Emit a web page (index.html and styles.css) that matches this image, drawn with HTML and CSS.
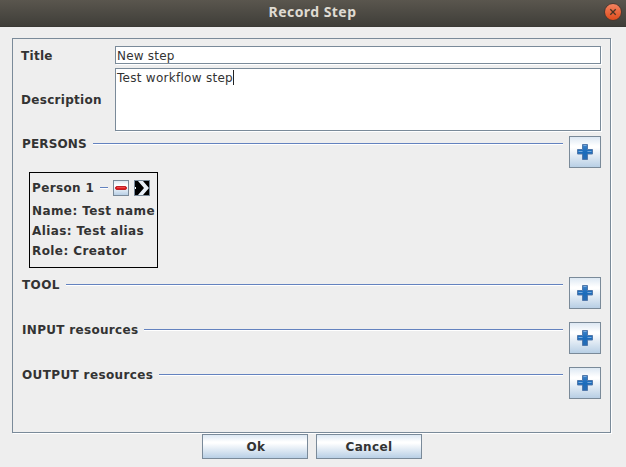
FILE: index.html
```
<!DOCTYPE html>
<html lang="en">
<head>
<meta charset="utf-8">
<title>Record Step</title>
<link rel="stylesheet" href="styles.css">
</head>
<body>
<svg class="defs" aria-hidden="true">
  <defs>
    <linearGradient id="blue" x1="0" y1="0" x2="0" y2="1"><stop offset="0" stop-color="#3f83c8"/><stop offset=".5" stop-color="#1a6cbc"/><stop offset="1" stop-color="#286cb4"/></linearGradient>
    <symbol id="plus" viewBox="0 0 16 16">
      <path d="M5.500 .5h5v5h5v4.500h-5v5.500h-5v-5.500h-5v-4.500h5z" fill="url(#blue)" stroke="#5279ab" stroke-linejoin="round"/>
      <path d="M6.500 1.500h3M1.500 7.500h4M10.500 7.500h4" stroke="#76aade" fill="none"/>
    </symbol>
  </defs>
</svg>
<header class="titlebar">
  <h1>Record Step</h1>
  <button class="close" aria-label="Close"><svg width="18" height="18" viewBox="0 0 18 18"><path d="M6.300 6.300l5.400 5.400M11.700 6.300l-5.400 5.400" stroke="#493424" stroke-width="1.300"/></svg></button>
</header>
<main class="panel">
  <div class="fields">
    <span class="label title-label">Title</span><div class="input short">New step</div>
    <span class="label">Description</span><div class="input area">Test workflow step<i class="caret"></i></div>
  </div>
  <section class="section persons">
    <div class="heading"><h2>PERSONS</h2><hr></div>
    <button class="add" aria-label="Add person"><svg width="16" height="16"><use href="#plus"/></svg></button>
  </section>
  <article class="card">
    <div class="card-head"><span>Person 1</span><hr>
      <button class="mini" aria-label="Remove"><svg width="14" height="14" viewBox="0 0 14 14"><rect x="1.500" y="5.500" width="11" height="3" rx="1.500" fill="#e01c1c" stroke="#c02028"/><path d="M3 6.500h8" stroke="#ec4a4a"/></svg></button>
      <button class="mini expand" aria-label="Expand"><svg width="14" height="14" viewBox="0 0 14 14"><path d="M3 0H8L14 7L8 14H3L9 7Z" fill="#e9f0f8"/><path d="M0 6h1v2H0z" fill="#fff"/></svg></button>
    </div>
    <p>Name: Test name</p><p>Alias: Test alias</p><p>Role: Creator</p>
  </article>
  <section class="section"><div class="heading"><h2>TOOL</h2><hr></div><button class="add" aria-label="Add tool"><svg width="16" height="16"><use href="#plus"/></svg></button></section>
  <section class="section inputs"><div class="heading"><h2>INPUT resources</h2><hr></div><button class="add" aria-label="Add input"><svg width="16" height="16"><use href="#plus"/></svg></button></section>
  <section class="section"><div class="heading"><h2>OUTPUT resources</h2><hr></div><button class="add" aria-label="Add output"><svg width="16" height="16"><use href="#plus"/></svg></button></section>
</main>
<footer class="actions"><button class="action ok">Ok</button><button class="action">Cancel</button></footer>
</body>
</html>
```
FILE: styles.css
```
* { box-sizing: border-box; }
body { margin: 0; width: 626px; height: 467px; overflow: hidden; background: #eee; color: #333; font: bold 12px/14px "DejaVu Sans", sans-serif; letter-spacing: .37px; }
h1, h2, p, hr { margin: 0; }
button { padding: 0; font: inherit; color: inherit; letter-spacing: inherit; }
.defs { position: absolute; width: 0; height: 0; }
.titlebar { display: grid; grid-template-columns: 30px 1fr 30px; align-items: center; height: 27px; padding-bottom: 3px; background: linear-gradient(#5a564e, #3f3e39); border-bottom: 1px solid #3a3935; }
.titlebar h1 { grid-column: 2; padding-right: 1px; text-align: center; color: #dfdbd2; font: bold 14px/20px "Noto Sans", sans-serif; letter-spacing: .45px; }
.close { width: 18px; height: 18px; margin-left: 8px; border: 1px solid #4a3a32; border-radius: 50%; background: linear-gradient(#f38360, #e04c1c); display: flex; align-items: center; justify-content: center; }
.close svg { flex: none; }
.panel { width: 599px; height: 395px; margin: 11px 0 0 12px; padding: 7px 9px 0 8px; border: 1px solid #7a8a99; box-shadow: 1px 1px #fff; }
.fields { display: grid; grid-template-columns: 94px 486px; grid-template-rows: 18px 63px; row-gap: 4px; align-items: center; }
.label { letter-spacing: .3px; }
.title-label { padding-top: 2px; }
.input { height: 100%; padding: 1px 1px 0; border: 1px solid #7a8a99; box-shadow: 1px 1px #fff; background: #fff; font-weight: normal; letter-spacing: .28px; line-height: 16px; display: flex; align-items: flex-start; }
.short { letter-spacing: .2px; }
.caret { width: 1px; height: 15px; background: #222; }
.section { display: flex; justify-content: space-between; height: 32px; margin: 0 0 13px 1px; }
.persons { margin-top: 5px; margin-bottom: 4px; }
.heading { display: flex; align-items: center; gap: 6px; width: 541px; height: 15px; }
h2 { font: inherit; white-space: nowrap; }
.persons h2 { letter-spacing: .14px; }
.inputs h2 { letter-spacing: .31px; }
hr { flex: 1; height: 2px; border: 0; border-top: 1px solid #6382bf; background: #fff; }
.add, .action, .mini { display: flex; align-items: center; justify-content: center; border: 1px solid #7a8a99; background: linear-gradient(#dde8f3 0%, #fff 30%, #fff 35%, #b8cfe5 100%); }
.add { width: 32px; height: 32px; }
.card { width: 129px; height: 96px; margin: 0 0 9px 8px; padding: 6px 2px; border: 1px solid #000; white-space: nowrap; }
.card-head { display: flex; align-items: center; height: 18px; margin-bottom: 4px; }
.card-head hr { flex: none; width: 8px; margin: 0 5px 0 6px; }
.mini { width: 16px; height: 16px; margin-right: 5px; }
.mini svg { flex: none; }
.expand { margin-right: 0; background: #000; }
.card p { height: 20px; line-height: 20px; letter-spacing: .41px; }
.actions { display: flex; gap: 8px; margin: 1px 0 0 202px; }
.action { width: 106px; height: 25px; }
.ok { padding-left: 2px; }
```
